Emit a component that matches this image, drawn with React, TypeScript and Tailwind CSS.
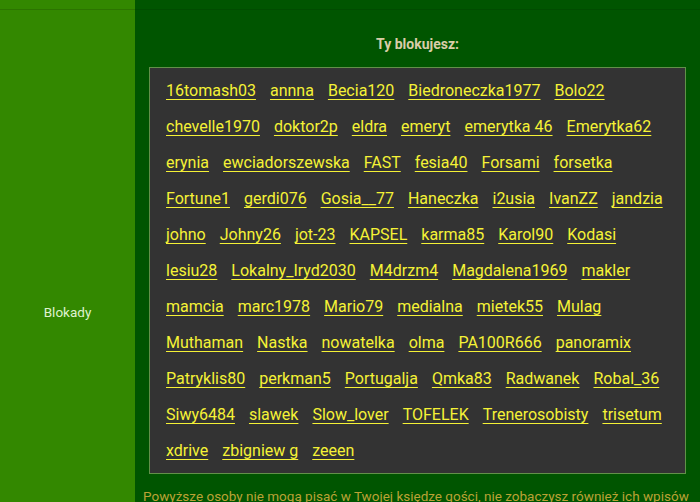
const blocked = [
  "16tomash03", "annna", "Becia120", "Biedroneczka1977", "Bolo22",
  "chevelle1970", "doktor2p", "eldra", "emeryt", "emerytka 46", "Emerytka62",
  "erynia", "ewciadorszewska", "FAST", "fesia40", "Forsami", "forsetka",
  "Fortune1", "gerdi076", "Gosia__77", "Haneczka", "i2usia", "IvanZZ", "jandzia",
  "johno", "Johny26", "jot-23", "KAPSEL", "karma85", "Karol90", "Kodasi",
  "lesiu28", "Lokalny_Iryd2030", "M4drzm4", "Magdalena1969", "makler",
  "mamcia", "marc1978", "Mario79", "medialna", "mietek55", "Mulag",
  "Muthaman", "Nastka", "nowatelka", "olma", "PA100R666", "panoramix",
  "Patryklis80", "perkman5", "Portugalja", "Qmka83", "Radwanek", "Robal_36",
  "Siwy6484", "slawek", "Slow_lover", "TOFELEK", "Trenerosobisty", "trisetum",
  "xdrive", "zbigniew g", "zeeen",
];

export default function App() {
  return (
    <div
      className="h-[502px] w-[700px] overflow-hidden bg-[#005500]"
      style={{ fontFamily: "Roboto, 'Liberation Sans', sans-serif" }}
    >
      {/* previous table row */}
      <div className="flex h-[9px]">
        <div className="w-[135px] shrink-0 bg-[#338800]" />
        <div className="flex-1 bg-[#005500]" />
      </div>

      {/* Blokady row */}
      <div className="flex">
        <div className="flex w-[135px] shrink-0 items-center justify-center border-t border-[#2c7400] bg-[#338800] pt-[2px] text-[13.5px] text-[#dff3cf]">
          Blokady
        </div>
        <div className="flex min-w-0 flex-1 flex-col border-t border-[#004c00] bg-[#005500] pb-[106px] pt-[25px]">
          <div className="text-center text-[14px] font-bold leading-[18px] text-[#d9cda8]">
            Ty blokujesz:
          </div>
          <div className="mx-[14px] mt-[14px] border border-[#62904a] bg-[#333333] pb-[4px] pl-[16px] pr-[16px] pt-[5px]">
            <div className="flex flex-wrap gap-x-[14px] text-[16px] leading-[36px]">
              {blocked.map((name) => (
                <a
                  key={name}
                  href="#"
                  className="whitespace-pre text-[#f5f236] underline decoration-1 underline-offset-[3px]"
                >
                  {name}
                </a>
              ))}
            </div>
          </div>
          <div className="mt-[12px] whitespace-nowrap pl-[8px] text-[13.5px] leading-[20px] text-[#bba236]">
            Powyższe osoby nie mogą pisać w Twojej księdze gości, nie zobaczysz również ich wpisów
          </div>
        </div>
      </div>
    </div>
  );
}
